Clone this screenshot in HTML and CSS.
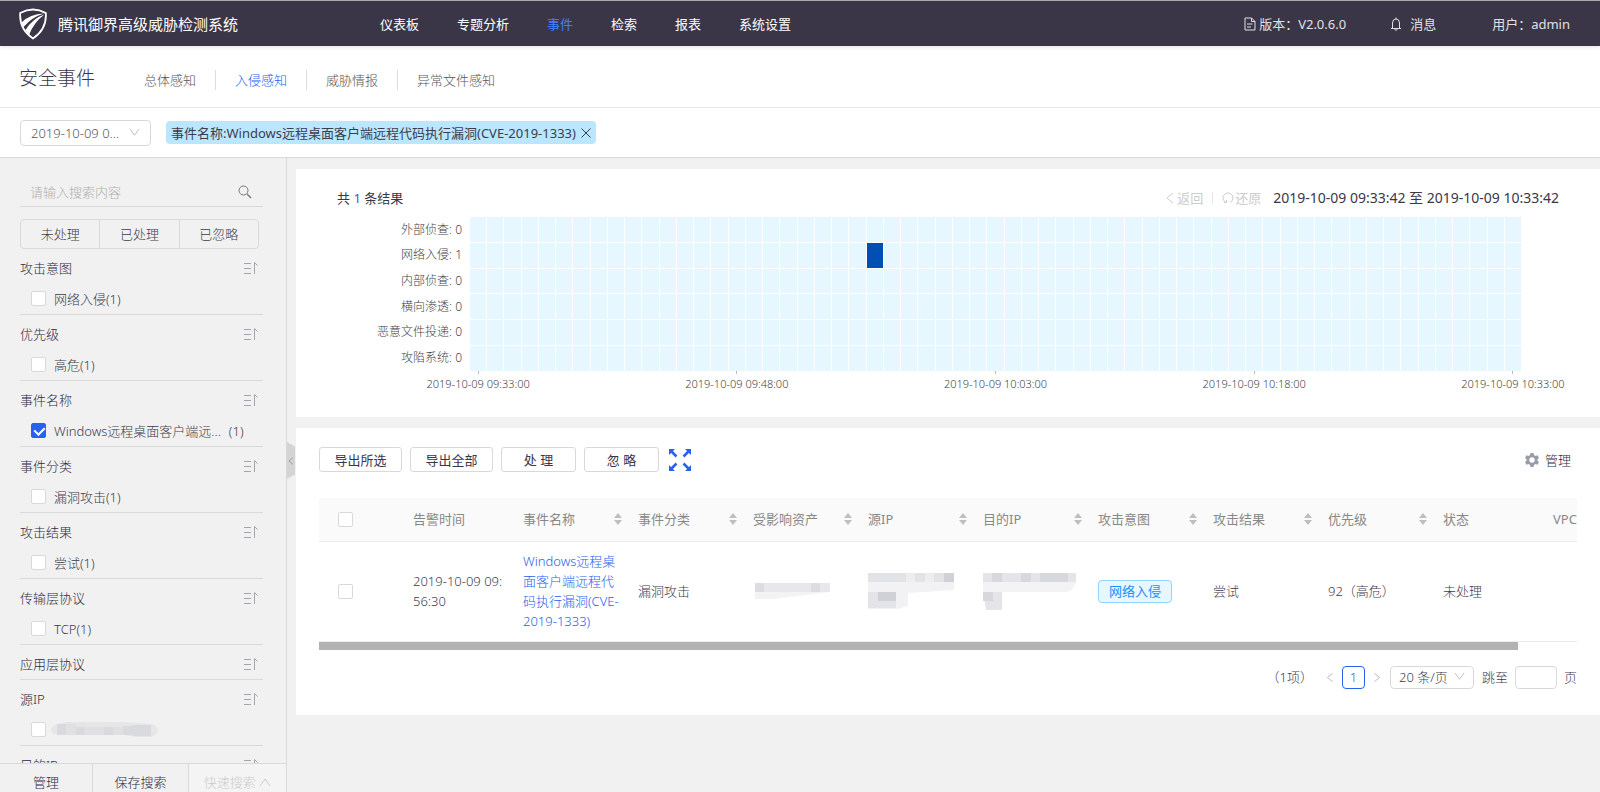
FILE: index.html
```html
<!DOCTYPE html>
<html lang="zh-CN">
<head>
    <meta charset="UTF-8">
    <meta name="viewport" content="width=device-width, initial-scale=1.0">
    <title>腾讯御界高级威胁检测系统</title>
    <link rel="stylesheet" href="styles.css">
</head>
<body>
    <!-- Shared icons -->
    <svg class="icon-defs" aria-hidden="true">
        <symbol id="icon-down" viewBox="0 0 12 12"><path d="M1 2l5 7 5-7" fill="none" stroke="currentColor"/></symbol>
        <symbol id="icon-left" viewBox="0 0 12 12"><path d="M9 1L3 6l6 5" fill="none" stroke="currentColor"/></symbol>
        <symbol id="icon-right" viewBox="0 0 12 12"><path d="M3 1l6 5-6 5" fill="none" stroke="currentColor"/></symbol>
        <symbol id="icon-sort" viewBox="0 0 14 14"><path d="M0 2.5h7M0 7.5h7M0 12.5h7M10.5 13V1.5l3 3" fill="none" stroke="currentColor"/></symbol>
        <symbol id="icon-sorter" viewBox="0 0 8 14"><path d="M4 1l4 5H0zM4 13l4-5H0z" fill="currentColor"/></symbol>
    </svg>

    <!-- Top bar -->
    <header class="topbar">
        <div class="brand">
            <svg class="brand-logo" viewBox="0 0 28 32">
                <path d="M1.200 5Q14-2 26.800 5 28 21 14 30.500 0 21 1.200 5z" fill="none" stroke="#fff" stroke-width="1.800"/>
                <path d="M2.500 14.500Q11 6 25 5.500Q13 9 4.500 19z" fill="#fff"/>
                <path d="M6.500 22Q14 10 25.500 6.500Q15 14 10 27z" fill="#fff"/>
            </svg>
            <span>腾讯御界高级威胁检测系统</span>
        </div>
        <nav class="main-nav">
            <a href="#">仪表板</a>
            <a href="#">专题分析</a>
            <a href="#" class="active">事件</a>
            <a href="#">检索</a>
            <a href="#">报表</a>
            <a href="#">系统设置</a>
        </nav>
        <div class="user-nav">
            <a href="#" class="version">
                <svg width="12" height="14" viewBox="0 0 12 14"><path d="M1 1h6.500L11 4.500V13H1zM7.500 1v3.500H11M3 7h5.500M3 10h4" fill="none" stroke="currentColor"/></svg>
                版本：V2.0.6.0
            </a>
            <a href="#" class="message">
                <svg width="12" height="14" viewBox="0 0 12 14"><path d="M1 11.500h10M2.500 11V6a3.500 4 0 0 1 7 0v5M6 .5V2M4.500 12.500q1.500 1.500 3 0" fill="none" stroke="currentColor"/></svg>
                消息
            </a>
            <a href="#">用户：admin</a>
        </div>
    </header>

    <!-- Page title and tabs -->
    <div class="subbar">
        <h1>安全事件</h1>
        <nav class="tabs">
            <a href="#">总体感知</a>
            <a href="#" class="active">入侵感知</a>
            <a href="#">威胁情报</a>
            <a href="#">异常文件感知</a>
        </nav>
    </div>

    <!-- Active filters -->
    <div class="filterbar">
        <div class="select time-select">
            <select aria-label="时间范围"><option>2019-10-09 0...</option></select>
            <svg><use href="#icon-down"/></svg>
        </div>
        <div class="filter-tag">
            <span>事件名称:Windows远程桌面客户端远程代码执行漏洞(CVE-2019-1333)</span>
            <button type="button" aria-label="移除">
                <svg width="10" height="10" viewBox="0 0 10 10"><path d="M.5.5l9 9M9.500.5l-9 9" fill="none" stroke="currentColor"/></svg>
            </button>
        </div>
    </div>

    <div class="layout">
        <!-- Sidebar -->
        <aside class="sidebar">
            <div class="facets">
                <div class="search">
                    <input type="text" placeholder="请输入搜索内容" aria-label="搜索">
                    <svg width="14" height="14" viewBox="0 0 14 14"><circle cx="5.500" cy="5.500" r="4.500" fill="none" stroke="currentColor"/><path d="M9 9l4 4" stroke="currentColor" stroke-width="1.500"/></svg>
                </div>
                <div class="segment">
                    <button type="button">未处理</button>
                    <button type="button">已处理</button>
                    <button type="button">已忽略</button>
                </div>
                <section class="facet">
                    <h2>攻击意图 <svg><use href="#icon-sort"/></svg></h2>
                    <label><input type="checkbox">网络入侵(1)</label>
                </section>
                <section class="facet">
                    <h2>优先级 <svg><use href="#icon-sort"/></svg></h2>
                    <label><input type="checkbox">高危(1)</label>
                </section>
                <section class="facet">
                    <h2>事件名称 <svg><use href="#icon-sort"/></svg></h2>
                    <label><input type="checkbox" checked>Windows远程桌面客户端远... <span>(1)</span></label>
                </section>
                <section class="facet">
                    <h2>事件分类 <svg><use href="#icon-sort"/></svg></h2>
                    <label><input type="checkbox">漏洞攻击(1)</label>
                </section>
                <section class="facet">
                    <h2>攻击结果 <svg><use href="#icon-sort"/></svg></h2>
                    <label><input type="checkbox">尝试(1)</label>
                </section>
                <section class="facet">
                    <h2>传输层协议 <svg><use href="#icon-sort"/></svg></h2>
                    <label><input type="checkbox">TCP(1)</label>
                </section>
                <section class="facet">
                    <h2>应用层协议 <svg><use href="#icon-sort"/></svg></h2>
                </section>
                <section class="facet">
                    <h2>源IP <svg><use href="#icon-sort"/></svg></h2>
                    <label>
                        <input type="checkbox" aria-label="源IP">
                        <svg class="mask-ip" width="107" height="16" viewBox="0 0 107 16">
                            <path d="M7 2L16 0H72L100 2Q107 4 107 8T100 15H84L74 13H12Q0 13 0 8 0 4 7 2z" fill="#e6e6e7"/>
                            <path d="M6 2h9v11H6zM25 5h9v8h-9zM53 5h9v8h-9zM72 4h10v9H72zM82 3h18v11H82z" fill="#d9dade"/>
                            <path d="M15 2h10v11H15zM34 5h19v8H34zM62 5h10v8H62z" fill="#e0dfe1"/>
                        </svg>
                    </label>
                </section>
                <section class="facet">
                    <h2>目的IP <svg><use href="#icon-sort"/></svg></h2>
                </section>
            </div>
            <div class="sidebar-footer">
                <button type="button" class="footer-manage">管理</button>
                <button type="button" class="footer-save">保存搜索</button>
                <button type="button" class="footer-quick" disabled>快速搜索
                    <svg width="12" height="10" viewBox="0 0 12 10"><path d="M1 9l5-7 5 7" fill="none" stroke="currentColor"/></svg>
                </button>
            </div>
            <button type="button" class="collapse" aria-label="收起"><svg><use href="#icon-left"/></svg></button>
        </aside>

        <!-- Content -->
        <main class="content">
            <section class="card chart-card">
                <div class="chart-head">
                    <div>共 <b>1</b> 条结果</div>
                    <div class="chart-tools">
                        <button type="button" disabled><svg><use href="#icon-left"/></svg>返回</button>
                        <button type="button" disabled><svg viewBox="0 0 12 12"><path d="M4 10.500A5 5 0 1 1 8 10.500M2 10.500h2.500V8" fill="none" stroke="currentColor"/></svg>还原</button>
                        <span>2019-10-09 09:33:42 至 2019-10-09 10:33:42</span>
                    </div>
                </div>
                <div class="chart">
                    <ul class="chart-rows">
                        <li>外部侦查: 0</li>
                        <li>网络入侵: 1</li>
                        <li>内部侦查: 0</li>
                        <li>横向渗透: 0</li>
                        <li>恶意文件投递: 0</li>
                        <li>攻陷系统: 0</li>
                    </ul>
                    <div class="heatmap" id="heatmap"></div>
                    <div class="chart-axis" id="axis"></div>
                </div>
            </section>

            <section class="card table-card">
                <div class="toolbar">
                    <button type="button" class="btn btn-wide">导出所选</button>
                    <button type="button" class="btn btn-wide">导出全部</button>
                    <button type="button" class="btn">处 理</button>
                    <button type="button" class="btn">忽 略</button>
                    <button type="button" class="expand" aria-label="全屏">
                        <svg width="22" height="22" viewBox="0 0 22 22"><path d="M2 2l5.500 5.500M20 2l-5.500 5.500M2 20l5.500-5.500M20 20l-5.500-5.500" stroke="currentColor" stroke-width="2.500"/><path d="M0 0h6L0 6zM22 0h-6l6 6zM0 22h6l-6-6zM22 22h-6l6-6z" fill="currentColor"/></svg>
                    </button>
                    <a href="#" class="manage">
                        <svg width="16" height="16" viewBox="0 0 16 16"><path d="M6.500 1h3l.5 2 1.500 1 2-.7 1.500 2.600L13.500 7.300v1.400l1.500 1.400-1.500 2.600-2-.7-1.500 1-.5 2h-3L6 13l-1.500-1-2 .7L1 10.100l1.500-1.400V7.300L1 5.900l1.500-2.600 2 .7L6 3z" fill="#9a9cab"/><circle cx="8" cy="8" r="2.700" fill="#fff"/></svg>
                        管理
                    </a>
                </div>
                <div class="table-wrap">
                    <table>
                        <colgroup>
                            <col class="col-check"><col class="col-time">
                            <col><col><col><col><col><col><col><col>
                            <col class="col-state"><col>
                        </colgroup>
                        <thead>
                            <tr>
                                <th><input type="checkbox" aria-label="全选"></th>
                                <th>告警时间</th>
                                <th><div>事件名称 <svg><use href="#icon-sorter"/></svg></div></th>
                                <th><div>事件分类 <svg><use href="#icon-sorter"/></svg></div></th>
                                <th><div>受影响资产 <svg><use href="#icon-sorter"/></svg></div></th>
                                <th><div>源IP <svg><use href="#icon-sorter"/></svg></div></th>
                                <th><div>目的IP <svg><use href="#icon-sorter"/></svg></div></th>
                                <th><div>攻击意图 <svg><use href="#icon-sorter"/></svg></div></th>
                                <th><div>攻击结果 <svg><use href="#icon-sorter"/></svg></div></th>
                                <th><div>优先级 <svg><use href="#icon-sorter"/></svg></div></th>
                                <th>状态</th>
                                <th>VPC</th>
                            </tr>
                        </thead>
                        <tbody>
                            <tr>
                                <td><input type="checkbox" aria-label="选择"></td>
                                <td>2019-10-09 09:<br>56:30</td>
                                <td><a href="#">Windows远程桌<br>面客户端远程代<br>码执行漏洞(CVE-<br>2019-1333)</a></td>
                                <td>漏洞攻击</td>
                                <td>
                                    <svg width="78" height="18" viewBox="0 0 78 18">
                                        <path d="M2 1h75v9L20 17H2z" fill="#f3f3f5"/>
                                        <path d="M2 1h9v9H2zM58 1h9v9h-9z" fill="#dcdce1"/>
                                        <path d="M11 1h47v9H11zM67 1h10v9H67z" fill="#e8e8ec"/>
                                    </svg>
                                </td>
                                <td>
                                    <svg width="88" height="36" viewBox="0 0 88 36">
                                        <path d="M0 0h86v17L40 20V33L30 36H0z" fill="#f2f2f4"/>
                                        <path d="M0 0h86v9H0z" fill="#e2e3e7"/>
                                        <path d="M38 0h9v9h-9zM57 0h9v9h-9z" fill="#ededf0"/>
                                        <path d="M76 0h10v9H76zM10 19h18v9H10z" fill="#d0d1d7"/>
                                        <path d="M0 19h10v9H0zM0 28h28v7H0z" fill="#e4e4e8"/>
                                    </svg>
                                </td>
                                <td>
                                    <svg width="96" height="38" viewBox="0 0 96 38">
                                        <path d="M0 1h93v9q-2 10-12 10H0z" fill="#f3f3f5"/>
                                        <path d="M0 1h93v9H0zM0 20h19v18H3z" fill="#e5e5e9"/>
                                        <path d="M9 1h10v9H9zM38 1h10v9H38zM57 1h28v9H57zM0 20h10v9H0z" fill="#d7d8dd"/>
                                    </svg>
                                </td>
                                <td><span class="tag">网络入侵</span></td>
                                <td>尝试</td>
                                <td>92（高危）</td>
                                <td>未处理</td>
                                <td></td>
                            </tr>
                        </tbody>
                    </table>
                </div>
                <div class="scroll-thumb"></div>
                <div class="pagination">
                    <span>（1项）</span>
                    <div class="pager">
                        <button type="button" aria-label="上一页"><svg><use href="#icon-left"/></svg></button>
                        <button type="button" class="current">1</button>
                        <button type="button" aria-label="下一页"><svg><use href="#icon-right"/></svg></button>
                    </div>
                    <div class="select size-select">
                        <select aria-label="每页条数"><option>20 条/页</option></select>
                        <svg><use href="#icon-down"/></svg>
                    </div>
                    <label>跳至 <input type="text"> 页</label>
                </div>
            </section>
        </main>
    </div>

    <script>
        const heatmap = document.getElementById('heatmap');
        const axis = document.getElementById('axis');
        const minutes = 61;
        const hits = { '1-23': true };  // row-minute of each event

        for (let row = 0; row < 6; row++) {
            for (let m = 0; m < minutes; m++) {
                const cell = document.createElement('i');
                if (hits[row + '-' + m]) cell.className = 'hit';
                heatmap.appendChild(cell);
            }
        }

        ['09:33:00', '09:48:00', '10:03:00', '10:18:00', '10:33:00'].forEach((time, i) => {
            const label = document.createElement('span');
            label.textContent = '2019-10-09 ' + time;
            label.style.gridColumn = i * 15 + 1;
            axis.appendChild(label);
        });
    </script>
</body>
</html>
```
FILE: styles.css
```css
/* General Styling */
* {
    box-sizing: border-box;
}

body {
    margin: 0;
    height: 100vh;
    display: flex;
    flex-direction: column;
    overflow: hidden;
    font-family: "Noto Sans", "Noto Sans CJK SC", sans-serif;
    font-size: 13px;
    font-weight: 300;
    line-height: 20px;
    color: #3c3c4c;
    background-color: #f1f1f1;
}

h1, h2, ul {
    margin: 0;
    padding: 0;
    font-weight: inherit;
    list-style: none;
}

a {
    color: inherit;
    text-decoration: none;
}

button, input, select {
    font: inherit;
    color: inherit;
    margin: 0;
    padding: 0;
    border: 0;
    background: none;
    outline: none;
}

button, select {
    cursor: pointer;
}

svg {
    flex: none;
}

.icon-defs {
    display: none;
}

input[type="checkbox"] {
    appearance: none;
    flex: none;
    display: block;
    width: 15px;
    height: 15px;
    border: 1px solid #d9d9d9;
    border-radius: 2px;
    background-color: #fff;
}

input[type="checkbox"]:checked {
    position: relative;
    border-color: #2861f0;
    background-color: #2861f0;
}

input[type="checkbox"]:checked::after {
    content: "";
    position: absolute;
    left: 4px;
    top: 1px;
    width: 5px;
    height: 8px;
    border: solid #fff;
    border-width: 0 2px 2px 0;
    transform: rotate(45deg);
}

/* Select */
.select {
    position: relative;
    border: 1px solid #d9d9d9;
    border-radius: 4px;
    background-color: #fff;
}

.select select {
    appearance: none;
    display: block;
    width: 100%;
    height: 100%;
}

.select svg {
    position: absolute;
    right: 10px;
    top: 50%;
    width: 11px;
    height: 11px;
    margin-top: -6px;
    color: #bbb;
    pointer-events: none;
}

/* Top bar */
.topbar {
    flex: none;
    display: flex;
    align-items: center;
    height: 46px;
    padding: 0 30px 0 19px;
    border-top: 1px solid #a9a9ad;
    background-color: #3a3648;
    color: #fff;
    font-weight: 400;
    box-shadow: 0 1px 4px rgba(0, 0, 0, 0.12);
    z-index: 1;
}

.brand {
    display: flex;
    align-items: center;
    gap: 11px;
    width: 361px;
    font-size: 15px;
}

.brand-logo {
    width: 28px;
    height: 32px;
}

.main-nav {
    display: flex;
    gap: 38px;
}

.main-nav .active {
    color: #4080ff;
}

.user-nav {
    display: flex;
    gap: 44px;
    margin-left: auto;
    color: #e0e0e4;
}

.user-nav a {
    display: flex;
    align-items: center;
    gap: 3px;
}

.user-nav .message {
    gap: 8px;
    margin-right: 12px;
}

/* Title and tabs */
.subbar {
    flex: none;
    display: flex;
    align-items: center;
    height: 62px;
    padding: 0 19px;
    border-bottom: 1px solid #e6e6e6;
    background-color: #fff;
}

.subbar h1 {
    width: 106px;
    padding-top: 2px;
    font-size: 19px;
    line-height: 28px;
    color: #3a3648;
}

.tabs {
    display: flex;
    padding-top: 7px;
}

.tabs a {
    padding: 0 19px;
    color: #555;
}

.tabs a + a {
    border-left: 1px solid #dcdce6;
}

.tabs .active {
    color: #2861f0;
}

/* Filters */
.filterbar {
    flex: none;
    display: flex;
    align-items: center;
    gap: 15px;
    height: 50px;
    padding: 0 20px;
    border-bottom: 1px solid #d9d9d9;
    background-color: #fff;
}

.time-select {
    width: 131px;
    height: 26px;
}

.time-select select {
    padding-left: 10px;
    color: #555;
}

.filter-tag {
    display: flex;
    align-items: center;
    gap: 5px;
    height: 23px;
    padding: 0 5px;
    border-radius: 4px;
    background-color: #bae7ff;
    font-weight: 400;
}

.filter-tag button {
    display: flex;
}

/* Layout */
.layout {
    flex: 1;
    display: flex;
    min-height: 0;
}

/* Sidebar */
.sidebar {
    position: relative;
    flex: none;
    display: flex;
    flex-direction: column;
    width: 287px;
    border-right: 1px solid #d9d9d9;
}

.facets {
    flex: 1;
    min-height: 0;
    overflow: hidden;
    padding: 19px 23px 0 20px;
}

.search {
    display: flex;
    align-items: center;
    height: 30px;
    padding: 0 11px 0 10px;
    border-bottom: 1px solid #d9d9d9;
}

.search input {
    flex: 1;
    min-width: 0;
}

.search input::placeholder {
    color: #b0b0b0;
}

.search svg {
    color: #777;
}

.segment {
    display: flex;
    height: 30px;
    margin: 12px 4px 0 0;
    border: 1px solid #d9d9d9;
    border-radius: 4px;
}

.segment button {
    flex: 1;
}

.segment button + button {
    border-left: 1px solid #d9d9d9;
}

.facet {
    padding-top: 7px;
    border-bottom: 1px solid #d9d9d9;
}

.facet h2 {
    display: flex;
    align-items: center;
    justify-content: space-between;
    height: 27px;
    padding: 0 5px 4px 0;
    font-size: 13px;
    color: #2f2b3c;
}

.facet h2 svg {
    width: 14px;
    height: 14px;
    color: #a5a5b2;
}

.facet label {
    display: flex;
    align-items: center;
    gap: 8px;
    height: 31px;
    padding-left: 11px;
}

.mask-ip {
    margin-left: -3px;
}

.sidebar-footer {
    flex: none;
    display: flex;
    border-top: 1px solid #d9d9d9;
}

.sidebar-footer button {
    padding-top: 8px;
    color: #2f2b3c;
}

.sidebar-footer button + button {
    border-left: 1px solid #d9d9d9;
}

.sidebar-footer .footer-manage {
    width: 92px;
}

.sidebar-footer .footer-save {
    width: 96px;
}

.sidebar-footer .footer-quick {
    flex: 1;
    background-color: #f4f4f4;
    color: #ccc;
}

.collapse {
    position: absolute;
    right: -9px;
    top: 284px;
    display: flex;
    align-items: center;
    width: 8px;
    height: 37px;
    background-color: #d4d4d4;
    clip-path: polygon(0 0, 100% 12%, 100% 88%, 0 100%);
    color: #888;
}

.collapse svg {
    width: 8px;
    height: 10px;
}

/* Content */
.content {
    flex: 1;
    min-width: 0;
    padding: 11px 0 0 9px;
    overflow: hidden;
}

.card {
    background-color: #fff;
}

/* Heatmap chart */
.chart-card {
    padding: 19px 41px 23px;
    margin-bottom: 11px;
}

.chart-head {
    display: flex;
    justify-content: space-between;
    color: #3a3648;
    font-weight: 400;
}

.chart-head b {
    font-weight: 400;
    color: #2861f0;
}

.chart-tools {
    display: flex;
    align-items: center;
}

.chart-tools button {
    display: flex;
    align-items: center;
    gap: 1px;
    color: #ccc;
}

.chart-tools button + button {
    margin-left: 9px;
    padding-left: 10px;
    background: linear-gradient(#e6e6e6, #e6e6e6) left center / 1px 12px no-repeat;
}

.chart-tools svg {
    width: 12px;
    height: 12px;
}

.chart-tools span {
    margin-left: 12px;
    font-size: 14px;
}

.chart {
    display: grid;
    grid-template-columns: 125px 1fr;
    column-gap: 8px;
    padding: 9px 38px 0 0;
    font-size: 12px;
    color: #444;
}

.chart-rows {
    display: grid;
    grid-template-rows: repeat(6, 1fr);
    align-items: center;
    text-align: right;
}

.heatmap {
    display: grid;
    grid-template-columns: repeat(61, 1fr);
    gap: 1px;
    height: 154px;
}

.heatmap i {
    background-color: #e6f7ff;
}

.heatmap .hit {
    background-color: #0050b3;
}

.chart-axis {
    grid-column: 2;
    display: grid;
    grid-template-columns: repeat(61, 1fr);
    column-gap: 1px;
}

.chart-axis span {
    display: flex;
    flex-direction: column;
    align-items: center;
    width: 100%;
    min-width: 0;
    white-space: nowrap;
    font-size: 11px;
}

.chart-axis span::before {
    content: "";
    width: 1px;
    height: 3px;
    background-color: #bbb;
}

/* Table card */
.table-card {
    padding: 19px 23px 26px;
}

.toolbar {
    display: flex;
    align-items: center;
    gap: 8px;
    margin-bottom: 26px;
}

.btn {
    width: 75px;
    height: 25px;
    border: 1px solid #d9d9d9;
    border-radius: 3px;
    color: #3a3648;
    background-color: #fff;
    font-weight: 400;
}

.btn-wide {
    width: 83px;
}

.expand {
    display: flex;
    margin-left: 2px;
    color: #2861f0;
}

.manage {
    display: flex;
    align-items: center;
    gap: 5px;
    margin-left: auto;
    padding-right: 6px;
    color: #2f2b3c;
}

.table-wrap {
    overflow: hidden;
}

table {
    width: 1319px;
    table-layout: fixed;
    border-collapse: collapse;
}

col {
    width: 115px;
}

.col-check {
    width: 86px;
}

.col-time {
    width: 110px;
}

.col-state {
    width: 110px;
}

th, td {
    padding: 0 8px;
    text-align: left;
    border-bottom: 1px solid #ebebeb;
}

th {
    height: 43px;
    background-color: #fafafa;
    font-weight: 400;
    color: #888;
}

th div {
    display: flex;
    align-items: center;
    justify-content: space-between;
}

th svg {
    width: 8px;
    height: 14px;
    color: #bfbfbf;
}

th:first-child, td:first-child {
    padding-left: 19px;
}

td {
    height: 100px;
    white-space: nowrap;
}

td svg {
    display: block;
}

td a {
    color: #2861f0;
}

.tag {
    display: inline-block;
    padding: 0 10px;
    border: 1px solid #91d5ff;
    border-radius: 4px;
    line-height: 21px;
    color: #1890ff;
    background-color: #e6f7ff;
    font-weight: 400;
}

.scroll-thumb {
    width: calc(100% - 59px);
    height: 8px;
    background-color: #b2b2b2;
}

/* Pagination */
.pagination {
    display: flex;
    align-items: center;
    justify-content: flex-end;
    gap: 8px;
    margin-top: 16px;
}

.pager {
    display: flex;
    align-items: center;
    gap: 7px;
    margin-left: 4px;
}

.pager svg {
    display: block;
    width: 10px;
    height: 11px;
    color: #aaa;
}

.pager .current {
    width: 23px;
    height: 23px;
    border: 1px solid #2861f0;
    border-radius: 4px;
    color: #2861f0;
}

.size-select {
    width: 84px;
    height: 23px;
}

.size-select select {
    padding-left: 8px;
}

.size-select svg {
    right: 8px;
}

.pagination label {
    display: flex;
    align-items: center;
    gap: 7px;
}

.pagination input {
    width: 42px;
    height: 23px;
    padding: 0 6px;
    border: 1px solid #d9d9d9;
    border-radius: 4px;
}
```
